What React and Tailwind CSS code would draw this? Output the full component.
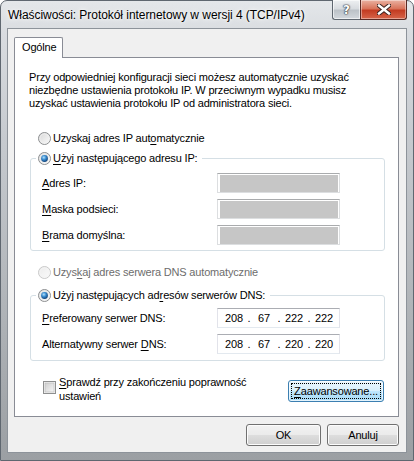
import { Fragment } from "react";

const ui = "font-['Liberation_Sans',Arial,sans-serif] text-[11px] leading-[13px] tracking-[-0.17px] text-black";

function Acc({ children }) {
  return <span className="underline decoration-[1px] underline-offset-[1.5px] tracking-normal">{children}</span>;
}

function Defs() {
  return (
    <svg className="absolute h-0 w-0" aria-hidden="true">
      <defs>
        <linearGradient id="rfill" x1="0" y1="0" x2="1" y2="1">
          <stop offset="0" stopColor="#d6d6d6" />
          <stop offset="1" stopColor="#fcfcfc" />
        </linearGradient>
        <linearGradient id="rfillOff" x1="0" y1="0" x2="1" y2="1">
          <stop offset="0" stopColor="#ebebeb" />
          <stop offset="1" stopColor="#fbfbfb" />
        </linearGradient>
        <radialGradient id="rdot" cx="0.4" cy="0.35" r="0.7">
          <stop offset="0" stopColor="#b4e2fb" />
          <stop offset="0.45" stopColor="#3a8cd0" />
          <stop offset="1" stopColor="#0c3a70" />
        </radialGradient>
        <linearGradient id="cfill" x1="0" y1="0" x2="1" y2="1">
          <stop offset="0" stopColor="#cfcfcf" />
          <stop offset="1" stopColor="#f6f6f6" />
        </linearGradient>
      </defs>
    </svg>
  );
}

function Radio({ checked, disabled }) {
  return (
    <svg width="13" height="13" viewBox="0 0 13 13" className="shrink-0">
      <circle cx="6.5" cy="6.5" r="6" fill={disabled ? "url(#rfillOff)" : "url(#rfill)"} stroke={disabled ? "#c9c9c9" : "#8c8e90"} />
      <circle cx="6.5" cy="6.5" r="4.6" fill="none" stroke={disabled ? "#f4f4f4" : "#f0f0f0"} strokeWidth="0.8" />
      {checked && <circle cx="6.5" cy="6.5" r="3.4" fill="url(#rdot)" />}
    </svg>
  );
}

function Checkbox() {
  return (
    <svg width="13" height="13" viewBox="0 0 13 13" className="mt-[6px] shrink-0">
      <rect x="0.5" y="0.5" width="12" height="12" fill="#f4f4f4" stroke="#8e8f8f" />
      <rect x="2" y="2" width="9" height="9" fill="url(#cfill)" stroke="#b8b8b8" strokeWidth="0.6" />
    </svg>
  );
}

function RadioRow({ checked, disabled, children }) {
  return (
    <div className="flex items-center gap-[2px]">
      <Radio checked={checked} disabled={disabled} />
      <span className={disabled ? "whitespace-nowrap text-[#6d6d6d]" : "whitespace-nowrap"}>{children}</span>
    </div>
  );
}

function IpBox({ value }) {
  if (!value) {
    return (
      <div className="h-[20px] w-[123px] border border-[#dcdee0] border-t-[#a9abad] bg-white pb-0 pl-[2px] pr-[1px] pt-[1px]">
        <div className="h-full w-full bg-[#c6c6c6]" />
      </div>
    );
  }
  const parts = value.split(".");
  return (
    <div className="flex h-[20px] w-[123px] items-center border border-[#e2e3ea] border-b-[#e3e9ef] border-t-[#abadb3] bg-white pl-[3px]">
      {parts.map((p, i) => (
        <Fragment key={i}>
          {i > 0 && <span className="w-[4px] text-center">.</span>}
          <span className="w-[26px] text-center">{p}</span>
        </Fragment>
      ))}
    </div>
  );
}

function FieldRow({ label, value }) {
  return (
    <div className="flex h-[20px] items-center">
      <span className="w-[175px] whitespace-nowrap">{label}</span>
      <IpBox value={value} />
    </div>
  );
}

function Group({ legend, children, pt, pb }) {
  return (
    <fieldset className={`ml-[15px] w-[355px] rounded-[3px] border border-[#d5dfe5] ${pt} ${pb}`}>
      <legend className="ml-[5px] pl-[2px] pr-[5px]">{legend}</legend>
      <div className="flex flex-col gap-[6px] pl-[11px]">{children}</div>
    </fieldset>
  );
}

function WinButton({ children, className = "" }) {
  return (
    <button className={`flex h-[22px] items-center justify-center rounded-[3px] border border-[#707070] bg-[linear-gradient(180deg,#f2f2f2_0%,#ebebeb_48%,#dddddd_52%,#cfcfcf_100%)] shadow-[inset_0_0_0_1px_#fcfcfc] ${className}`}>
      {children}
    </button>
  );
}

export default function App() {
  return (
    <div className={`h-[461px] w-[414px] bg-white ${ui}`}>
      <Defs />
      <div className="flex h-full w-full flex-col rounded-t-[7px] border border-[#5f6770] bg-[linear-gradient(180deg,#e4e7ea_0%,#d9dce0_7%,#c6cacf_30%,#aeb2b6_70%,#9b9fa3_100%)] px-[6px] pb-[7px]">
        {/* pasek tytułu */}
        <div className="flex h-[27px] items-start justify-between">
          <span className="ml-[1px] mt-[7px] whitespace-nowrap text-[12px] leading-[15px] tracking-[-0.05px] [text-shadow:0_0_6px_#ffffff,0_0_3px_#ffffff]">
            Właściwości: Protokół internetowy w wersji 4 (TCP/IPv4)
          </span>
          <div className="-mt-[1px] flex">
            <div className="flex h-[20px] w-[28px] items-center justify-center rounded-bl-[3px] border border-r-0 border-t-0 border-[#5f6770] bg-[linear-gradient(180deg,#eef0f2_0%,#d8dce0_45%,#bcc2c8_55%,#d3d8dd_100%)] shadow-[inset_0_0_0_1px_#ffffff99]">
              <span className="font-['DejaVu_Sans',sans-serif] text-[12px] font-bold leading-none text-white [text-shadow:0_0_1px_#2d3339,0_0_1px_#2d3339,0_0_2px_#2d3339]">?</span>
            </div>
            <div className="flex h-[20px] w-[47px] items-center justify-center rounded-br-[3px] border border-t-0 border-[#5a2a24] bg-[linear-gradient(180deg,#eab2a2_0%,#d9745b_45%,#c33c22_55%,#d7654a_100%)] shadow-[inset_0_0_0_1px_#ffffff66]">
              <svg width="14" height="11" viewBox="0 0 14 11">
                <path d="M2 1.5 L12 9.5 M12 1.5 L2 9.5" stroke="#3b2320" strokeWidth="4.4" strokeLinecap="square" />
                <path d="M2 1.5 L12 9.5 M12 1.5 L2 9.5" stroke="#ffffff" strokeWidth="2.4" strokeLinecap="square" />
              </svg>
            </div>
          </div>
        </div>

        {/* obszar klienta */}
        <div className="flex flex-1 flex-col border border-[#8d939a] bg-[#f0f0f0]">
          <div className="relative z-10 -mb-[1px] ml-[6px] mt-[8px] h-[21px] w-[49px] rounded-t-[2px] border border-b-0 border-[#898c95] bg-white pl-[7px] pt-[3px]">
            Ogólne
          </div>
          <div className="ml-[6px] flex h-[360px] w-[385px] flex-col border border-[#898c95] bg-white">
            <p className="ml-[14px] mt-[13px] whitespace-nowrap">
              Przy odpowiedniej konfiguracji sieci możesz automatycznie uzyskać
              <br />
              niezbędne ustawienia protokołu IP. W przeciwnym wypadku musisz
              <br />
              uzyskać ustawienia protokołu IP od administratora sieci.
            </p>

            <div className="ml-[23px] mt-[22px]">
              <RadioRow>
                Uzyskaj adres IP aut<Acc>o</Acc>matycznie
              </RadioRow>
            </div>

            <div className="mt-[7px]">
              <Group
                pt="pt-[8px]"
                pb="pb-[5px]"
                legend={
                  <RadioRow checked>
                    <Acc>U</Acc>żyj następującego adresu IP:
                  </RadioRow>
                }
              >
                <FieldRow label={<><Acc>A</Acc>dres IP:</>} />
                <FieldRow label={<><Acc>M</Acc>aska podsieci:</>} />
                <FieldRow label={<><Acc>B</Acc>rama domyślna:</>} />
              </Group>
            </div>

            <div className="ml-[23px] mt-[15px]">
              <RadioRow disabled>
                Uzys<Acc>k</Acc>aj adres serwera DNS automatycznie
              </RadioRow>
            </div>

            <div className="mt-[10px]">
              <Group
                pt="pt-[6px]"
                pb="pb-[6px]"
                legend={
                  <RadioRow checked>
                    Użyj następujących ad<Acc>r</Acc>esów serwerów DNS:
                  </RadioRow>
                }
              >
                <FieldRow label={<><Acc>P</Acc>referowany serwer DNS:</>} value="208.67.222.222" />
                <FieldRow label={<>Alternatywny serwer <Acc>D</Acc>NS:</>} value="208.67.220.220" />
              </Group>
            </div>

            <div className="mt-[14px] flex items-start pl-[28px]">
              <Checkbox />
              <div className="ml-[3px] flex w-[210px] flex-col leading-[14px]">
                <span className="whitespace-nowrap">
                  <Acc>S</Acc>prawdź przy zakończeniu poprawność
                </span>
                <span>ustawień</span>
              </div>
              <button className="ml-[19px] mt-[5px] h-[22px] w-[96px] rounded-[3px] border border-[#3c7fb1] bg-[linear-gradient(180deg,#eaf6fd_0%,#d9f0fc_48%,#bee6fd_52%,#a7d9f5_100%)] p-[2px] shadow-[inset_0_0_0_1px_#ffffffb0]">
                <div className="flex h-full w-full items-center justify-center border border-dotted border-black">
                  <span><Acc>Z</Acc>aawansowane...</span>
                </div>
              </button>
            </div>
          </div>

          <div className="mt-[7px] flex justify-end gap-[6px] pr-[7px]">
            <WinButton className="w-[75px]">OK</WinButton>
            <WinButton className="w-[72px]">Anuluj</WinButton>
          </div>
        </div>
      </div>
    </div>
  );
}
